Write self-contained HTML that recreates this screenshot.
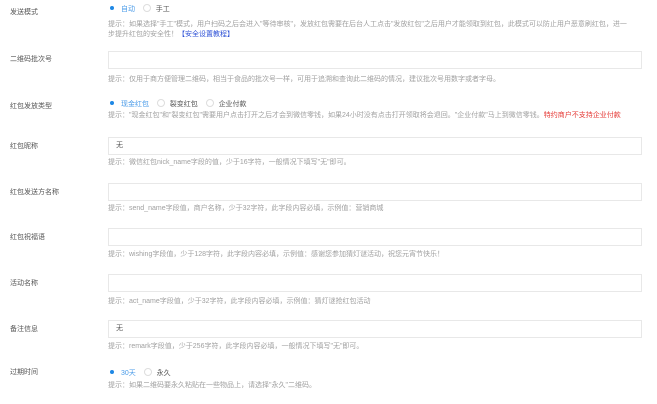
<!DOCTYPE html>
<html><head><meta charset="utf-8"><style>
*{margin:0;padding:0;box-sizing:border-box}
body{width:657px;height:404px;background:#fff;font-family:"Liberation Sans","Noto Sans CJK SC",sans-serif;color:#444;position:relative;overflow:hidden}
.l{position:absolute;left:10px;font-size:7px;color:#555;line-height:9px}
.h{position:absolute;left:108px;font-size:7px;color:#a0a0a0;line-height:10px;white-space:nowrap}
.in{position:absolute;left:108px;width:534px;height:18px;border:1px solid #e8e8e8;font-size:7px;color:#555;padding-left:7px;line-height:16px}
.r{position:absolute;font-size:7px;line-height:9px;color:#555;white-space:nowrap}
.r i{display:inline-block;width:8px;height:8px;border-radius:50%;border:1px solid #ddd;vertical-align:-1px;margin-right:5px}
.r i.on{border:none;position:relative}
.r i.on:after{content:"";position:absolute;left:2px;top:2px;width:4px;height:4px;border-radius:50%;background:#1e88e5}
.b{color:#4a9be8}
</style></head><body>
<div class="l" style="top:8px">发送模式</div>
<div class="r" style="left:108px;top:4px"><span class="b"><i class="on"></i>自动</span>&nbsp;&nbsp;&nbsp;&nbsp;<i></i>手工</div>
<div class="h" style="top:20px">提示：如果选择"手工"模式，用户扫码之后会进入"等待审核"，发放红包需要在后台人工点击"发放红包"之后用户才能领取到红包，此模式可以防止用户恶意刷红包，进一</div>
<div class="h" style="top:30px">步提升红包的安全性！<span style="color:#2b4fd6">【安全设置教程】</span></div>

<div class="l" style="top:55px">二维码批次号</div>
<div class="in" style="top:51px"></div>
<div class="h" style="top:75px">提示：仅用于商方便管理二维码，相当于食品的批次号一样，可用于追溯和查询此二维码的情况，建议批次号用数字或者字母。</div>

<div class="l" style="top:102px">红包发放类型</div>
<div class="r" style="left:108px;top:99px"><span class="b"><i class="on"></i>现金红包</span>&nbsp;&nbsp;&nbsp;&nbsp;<i></i>裂变红包&nbsp;&nbsp;&nbsp;&nbsp;<i></i>企业付款</div>
<div class="h" style="top:111px">提示："现金红包"和"裂变红包"需要用户点击打开之后才会到微信零钱，如果24小时没有点击打开领取将会退回。"企业付款"马上到微信零钱。<span style="color:#e53935">特约商户不支持企业付款</span></div>

<div class="l" style="top:142px">红包昵称</div>
<div class="in" style="top:137px">无</div>
<div class="h" style="top:158px">提示：微信红包nick_name字段的值，少于16字符，一般情况下填写"无"即可。</div>

<div class="l" style="top:188px">红包发送方名称</div>
<div class="in" style="top:183px"></div>
<div class="h" style="top:204px">提示：send_name字段值，商户名称，少于32字符，此字段内容必填，示例值：营销商城</div>

<div class="l" style="top:233px">红包祝福语</div>
<div class="in" style="top:228px"></div>
<div class="h" style="top:250px">提示：wishing字段值，少于128字符，此字段内容必填，示例值：感谢您参加猜灯谜活动，祝您元宵节快乐！</div>

<div class="l" style="top:279px">活动名称</div>
<div class="in" style="top:274px"></div>
<div class="h" style="top:297px">提示：act_name字段值，少于32字符，此字段内容必填，示例值：猜灯谜抢红包活动</div>

<div class="l" style="top:325px">备注信息</div>
<div class="in" style="top:320px">无</div>
<div class="h" style="top:342px">提示：remark字段值，少于256字符，此字段内容必填，一般情况下填写"无"即可。</div>

<div class="l" style="top:368px">过期时间</div>
<div class="r" style="left:108px;top:368px"><span class="b"><i class="on"></i>30天</span>&nbsp;&nbsp;&nbsp;&nbsp;<i></i>永久</div>
<div class="h" style="top:381px">提示：如果二维码要永久粘贴在一些物品上，请选择"永久"二维码。</div>
</body></html>
